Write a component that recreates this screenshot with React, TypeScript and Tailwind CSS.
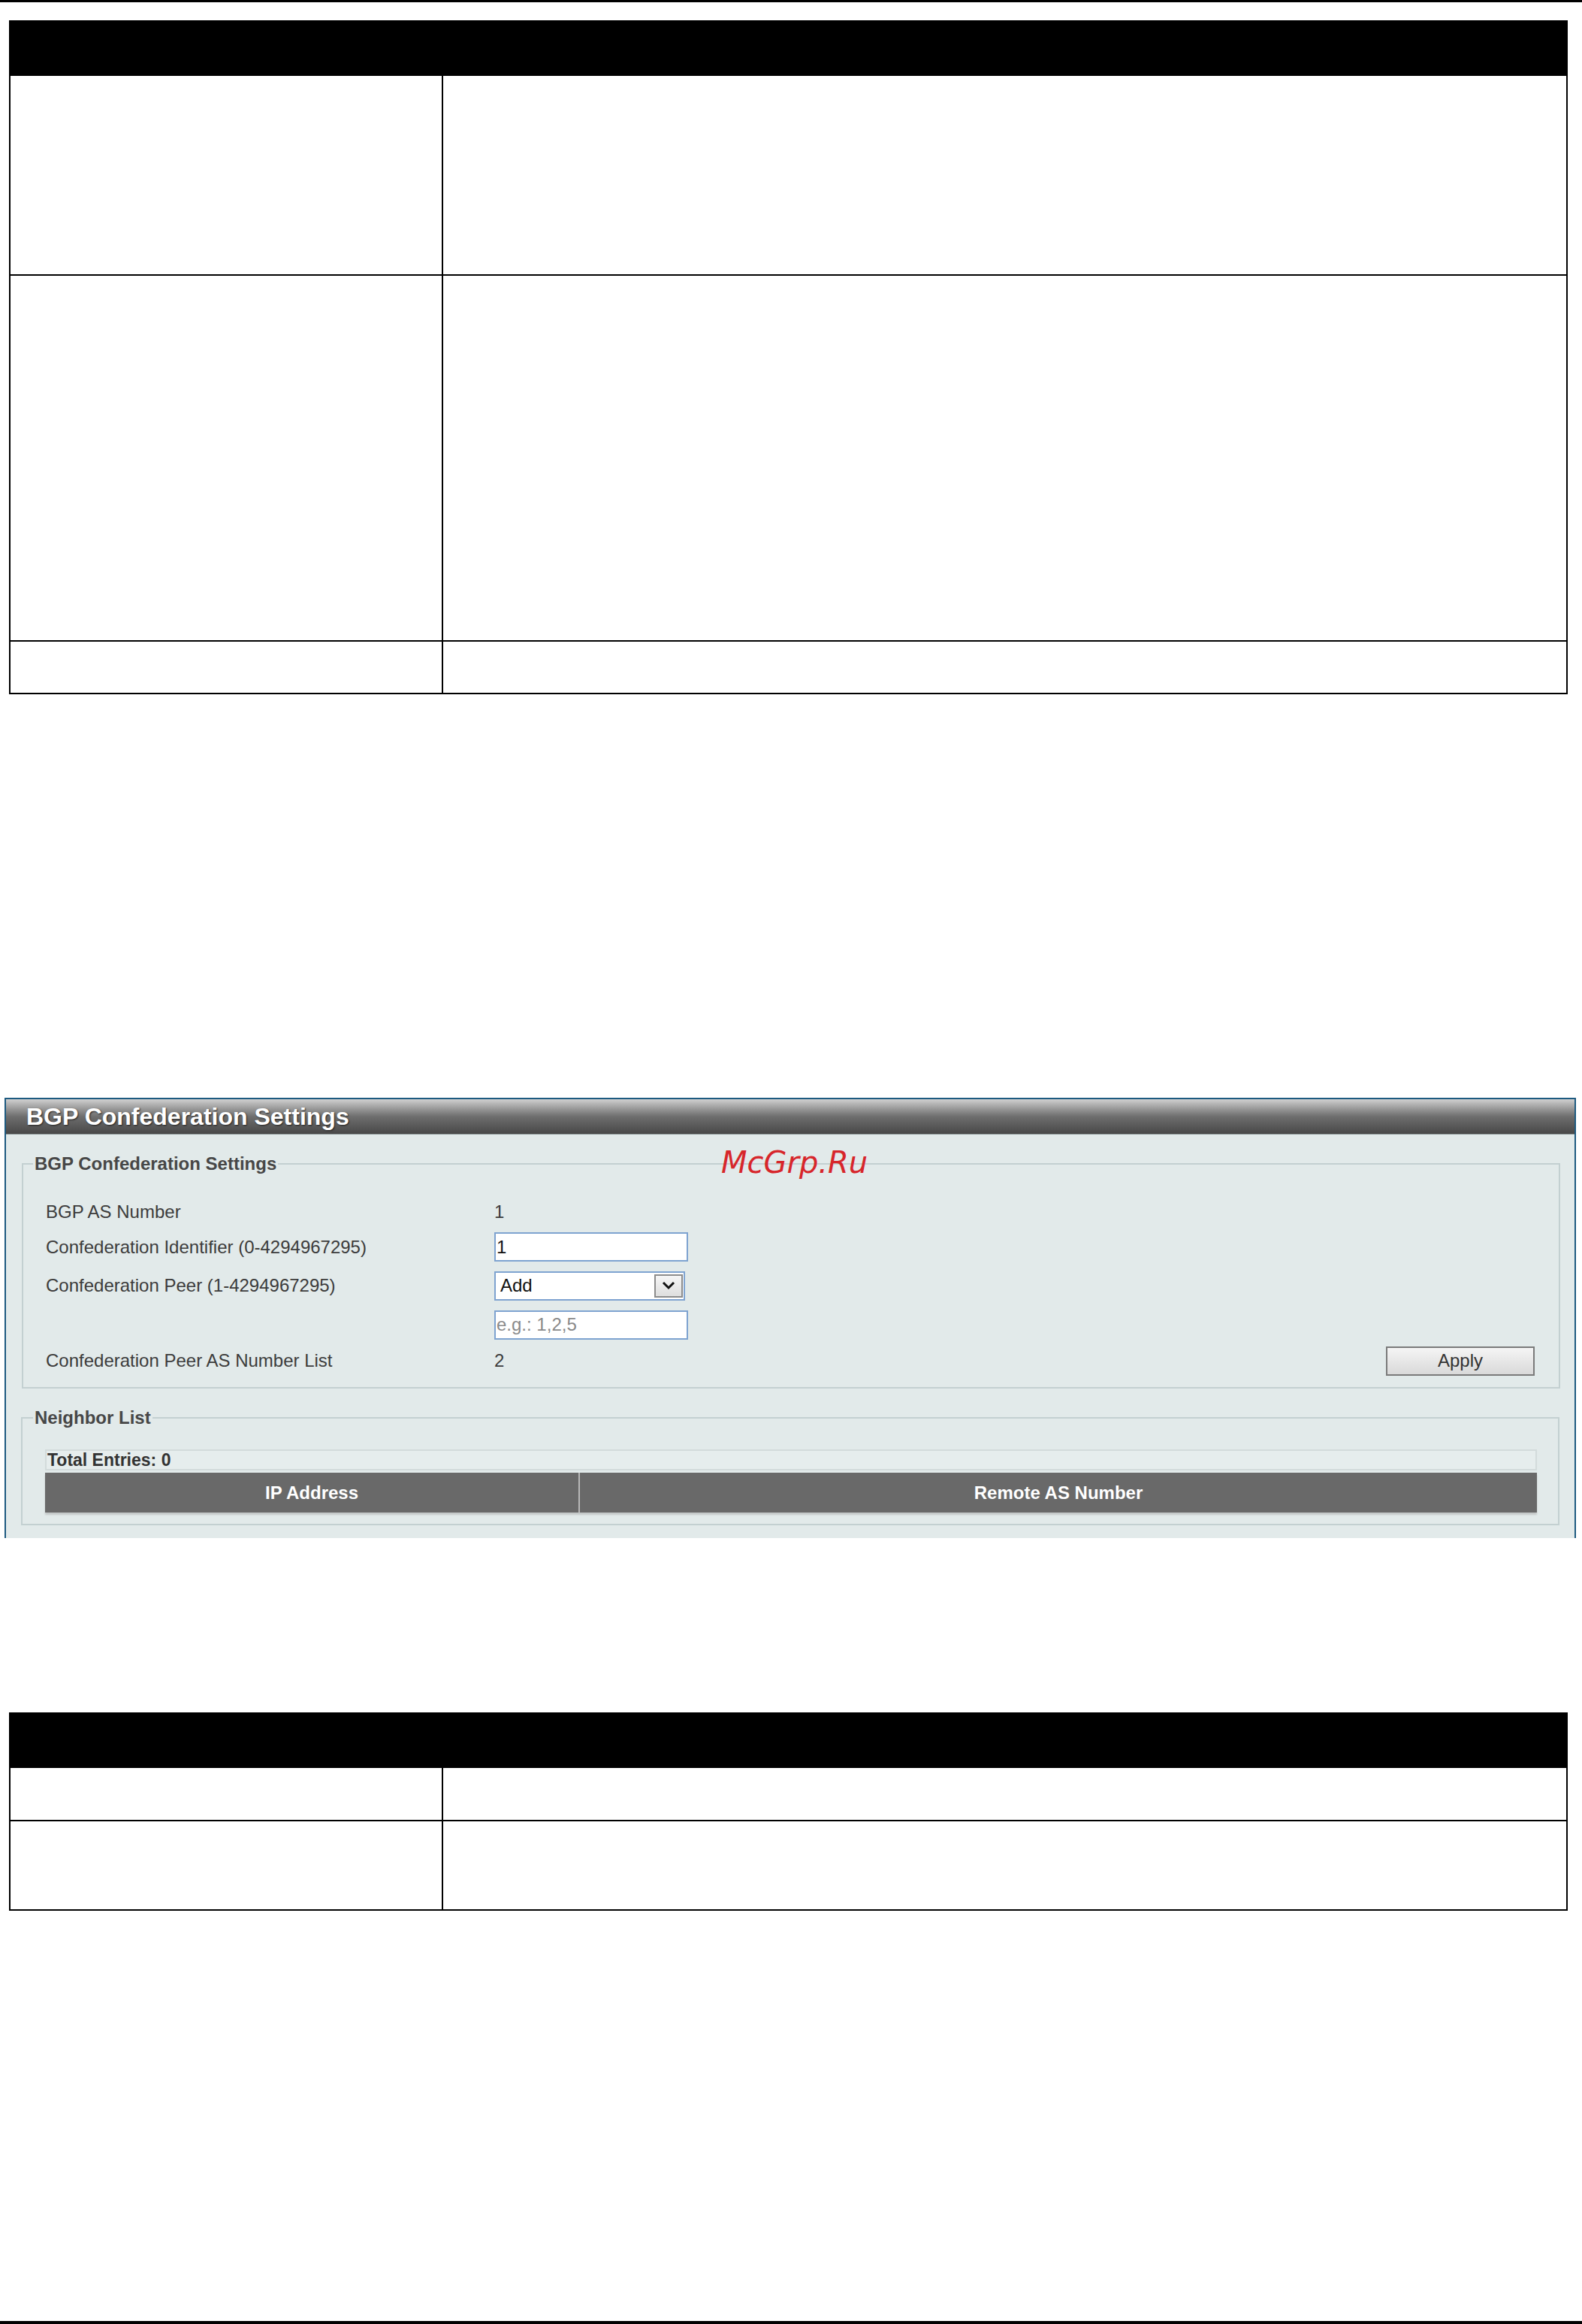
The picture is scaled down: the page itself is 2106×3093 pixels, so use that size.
import React from 'react'

const font = "font-['Liberation_Sans',Arial,sans-serif]"

function DocTable({rows}: {rows: {h: string; last?: boolean}[]}) {
  return (
    <div className="ml-[12px] w-[2075px] border-x-2 border-b-2 border-black">
      <div className="h-[74px] bg-black" />
      {rows.map((r, i) => (
        <div key={i} className={`flex ${r.h} ${r.last ? '' : 'border-b-2 border-black'}`}>
          <div className="w-[576px] shrink-0 border-r-2 border-black" />
          <div className="flex-1" />
        </div>
      ))}
    </div>
  )
}

function TextInput({value, placeholder}: {value?: string; placeholder?: string}) {
  return (
    <div className="flex h-[39px] w-[258px] items-center border-2 border-[#7ea3d0] bg-white px-[1px] text-[24px] leading-none">
      {value ? (
        <span className="text-[#111]">{value}</span>
      ) : (
        <span className="text-[#8a8a8a]">{placeholder}</span>
      )}
    </div>
  )
}

function SelectBox() {
  return (
    <div className="flex h-[39px] w-[254px] items-center justify-between border-2 border-[#7ea3d0] bg-white pl-[6px] pr-[1px]">
      <span className="text-[24px] leading-none text-[#111]">Add</span>
      <div className="flex h-[31px] w-[38px] items-center justify-center border-2 border-[#8c8c8c] bg-linear-to-b from-[#f6f6f6] to-[#dedede]">
        <svg width="18" height="12" viewBox="0 0 18 12">
          <path d="M2 2 L9 9 L16 2" fill="none" stroke="#111" strokeWidth="3" />
        </svg>
      </div>
    </div>
  )
}

function FormRow({label, h, children, right}: {label: string; h: string; children?: React.ReactNode; right?: React.ReactNode}) {
  return (
    <div className={`flex items-center ${h}`}>
      <div className="w-[597px] shrink-0 text-[24px] leading-none text-[#3c3c3c]">{label}</div>
      <div className="flex-1 text-[24px] leading-none text-[#3c3c3c]">{children}</div>
      {right}
    </div>
  )
}

function Panel() {
  return (
    <div className="relative ml-[6px] mt-[537px] h-[586px] w-[2092px] overflow-hidden border-x-2 border-t-2 border-[#1d5a80] bg-[#e2eaea]">
      <div className="flex h-[47px] items-center border-b border-[#8e9a9a] bg-linear-to-b from-[#d0d0d0] via-[#6e6e6e] to-[#484848] pl-[27px]">
        <span className="text-[32px] font-bold leading-none text-white [text-shadow:1px_1px_2px_#222]">
          BGP Confederation Settings
        </span>
      </div>

      <fieldset className="ml-[21px] mr-[19px] mt-[26px] border-2 border-[#c3d0d1] px-0 pb-[11px]">
        <legend className="ml-[13px] px-[2px] text-[24px] font-bold leading-[26px] text-[#474747]">
          BGP Confederation Settings
        </legend>
        <div className="pl-[30px] pr-[32px] pt-[28px]">
          <FormRow label="BGP AS Number" h="h-[46px]">1</FormRow>
          <FormRow label="Confederation Identifier (0-4294967295)" h="h-[47px]">
            <TextInput value="1" />
          </FormRow>
          <FormRow label="Confederation Peer (1-4294967295)" h="h-[56px]">
            <SelectBox />
          </FormRow>
          <FormRow label="" h="h-[48px]">
            <TextInput placeholder="e.g.: 1,2,5" />
          </FormRow>
          <FormRow
            label="Confederation Peer AS Number List"
            h="h-[48px]"
            right={
              <button className="flex h-[39px] w-[198px] items-center justify-center border-2 border-[#7a7a7a] bg-linear-to-b from-[#f5f5f5] to-[#d9d9d9] text-[24px] leading-none text-[#333]">
                Apply
              </button>
            }>
            2
          </FormRow>
        </div>
      </fieldset>

      <fieldset className="ml-[20px] mr-[20px] mt-[26px] border-2 border-[#c3d0d1] px-0 pb-[15px]">
        <legend className="ml-[14px] px-[2px] text-[24px] font-bold leading-[26px] text-[#474747]">
          Neighbor List
        </legend>
        <div className="pl-[30px] pr-[28px] pt-[29px]">
          <div className="flex h-[28px] items-center border-2 border-[#d3dbdb] bg-[#e6eded] pl-[1px] text-[23px] font-bold leading-none text-[#333]">
            Total Entries: 0
          </div>
          <div className="mt-[3px] flex h-[53px] bg-[#696969] text-[24px] font-bold leading-none text-white shadow-[0_3px_2px_#c4c8c8]">
            <div className="flex w-[712px] items-center justify-center border-r-2 border-[#b8b8b8]">IP Address</div>
            <div className="flex flex-1 items-center justify-center">Remote AS Number</div>
          </div>
        </div>
      </fieldset>

      <div className="absolute left-[952px] top-[64px] font-['DejaVu_Sans',sans-serif] text-[40px] italic leading-none text-[#d7262b]">
        McGrp.Ru
      </div>
    </div>
  )
}

export default function App() {
  return (
    <div className={`flex h-[3093px] w-[2106px] flex-col bg-white ${font}`}>
      <div className="h-[3px] bg-black" />
      <div className="mt-[24px]">
        <DocTable rows={[{h: 'h-[266px]'}, {h: 'h-[487px]'}, {h: 'h-[68px]', last: true}]} />
      </div>
      <Panel />
      <div className="mt-[232px]">
        <DocTable rows={[{h: 'h-[71px]'}, {h: 'h-[117px]', last: true}]} />
      </div>
      <div className="flex-1" />
      <div className="h-[4px] bg-black" />
    </div>
  )
}
